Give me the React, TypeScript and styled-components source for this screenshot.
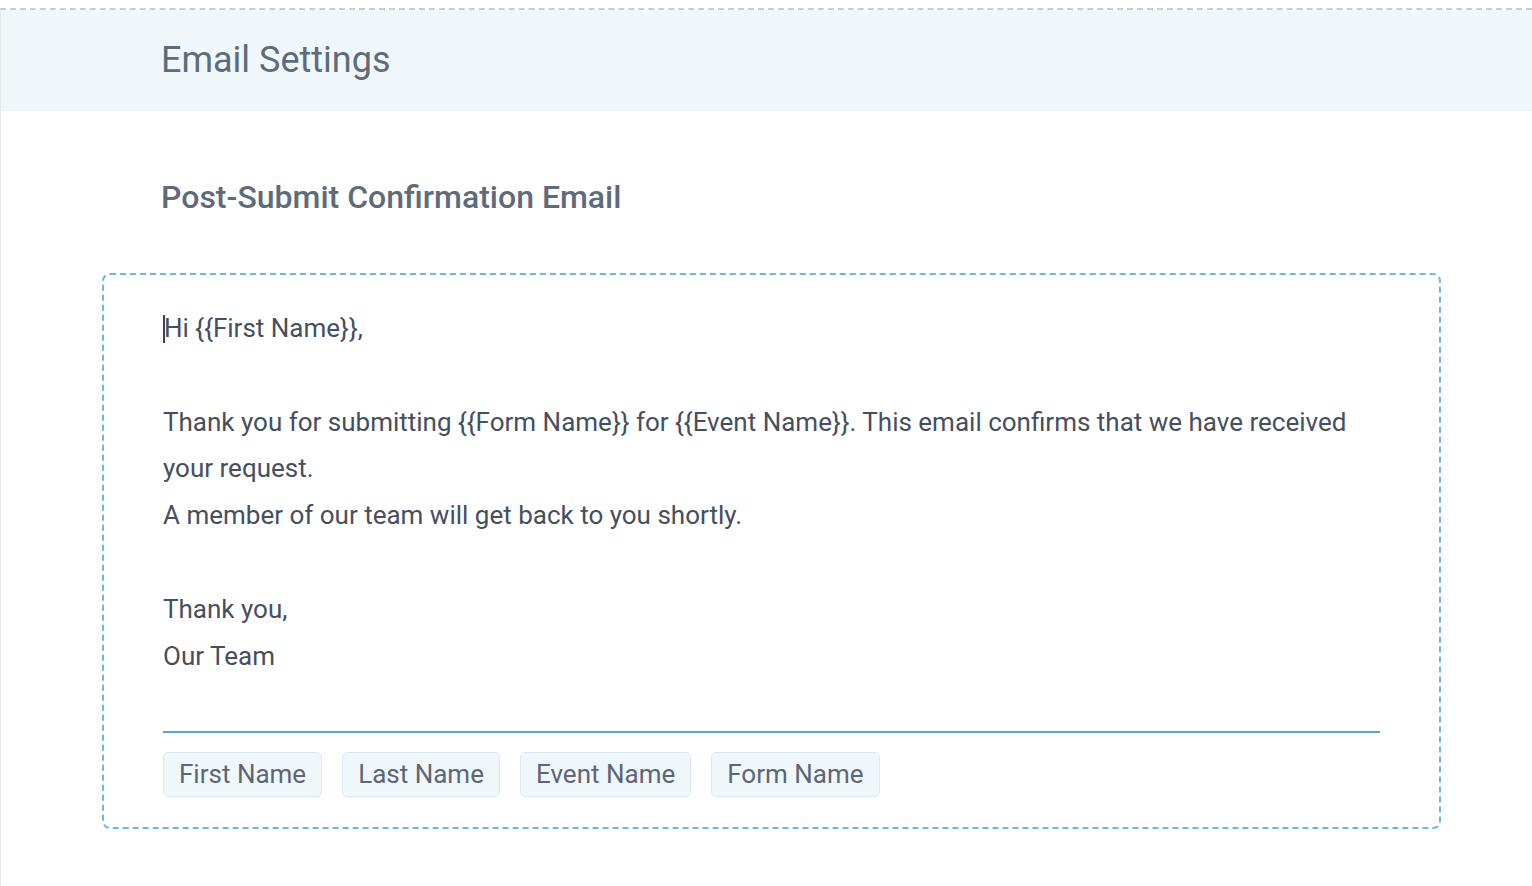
import React from "react";
import styled, { createGlobalStyle } from "styled-components";

const GlobalStyle = createGlobalStyle`
  html, body { margin: 0; padding: 0; background: #ffffff; }
  body { font-family: Roboto, "Liberation Sans", Arial, sans-serif; }
  * { box-sizing: border-box; }
`;

const Page = styled.div`
  margin-top: 8px;
  border-top: 2px dashed #cccccc;
  border-left: 1px solid #e6e8ea;
  min-height: calc(100vh - 8px);
`;

const HeaderBand = styled.header`
  height: 101px;
  background: #f0f7fb;
  display: flex;
  align-items: center;
  padding-left: 160px;
  padding-bottom: 1px;
`;

const PageTitle = styled.h1`
  margin: 0;
  font-size: 36px;
  font-weight: 400;
  color: #5f6b7a;
`;

const Content = styled.main`
  padding: 0 91px 40px 101px;
`;

const SectionTitle = styled.h2`
  margin: 67px 0 57px 59px;
  font-size: 32px;
  font-weight: 500;
  color: #5f6b7a;
`;

const EditorCard = styled.section`
  border: 2px dashed #6db6df;
  border-radius: 8px;
  padding: 30px 59px 30px 59px;
`;

const EditorArea = styled.div`
  font-size: 26px;
  line-height: 46.8px;
  color: #454f5e;
  padding-bottom: 52px;
  border-bottom: 2px solid #5aa5d6;
`;

const Line = styled.div`
  min-height: 46.8px;
`;

const Caret = styled.span`
  display: inline-block;
  width: 2px;
  height: 28px;
  background: #3a4350;
  vertical-align: -6px;
  margin-right: -1px;
`;

const ChipRow = styled.div`
  display: flex;
  gap: 20px;
  margin-top: 19px;
`;

const Chip = styled.button`
  height: 45px;
  padding: 0 15px;
  border: 1px solid #d9e9f2;
  border-radius: 5px;
  background: #f0f7fb;
  color: #5d6675;
  font-family: Roboto, "Liberation Sans", Arial, sans-serif;
  font-size: 26px;
  line-height: 43px;
  cursor: pointer;
`;

const lines: string[] = [
  "",
  "Thank you for submitting {{Form Name}} for {{Event Name}}. This email confirms that we have received your request.",
  "A member of our team will get back to you shortly.",
  "",
  "Thank you,",
  "Our Team",
];

const chips = ["First Name", "Last Name", "Event Name", "Form Name"];

export default function App() {
  return (
    <>
      <GlobalStyle />
      <Page>
        <HeaderBand>
          <PageTitle>Email Settings</PageTitle>
        </HeaderBand>
        <Content>
          <SectionTitle>Post-Submit Confirmation Email</SectionTitle>
          <EditorCard>
            <EditorArea>
              <Line>
                <Caret />
                Hi {"{{First Name}}"},
              </Line>
              {lines.map((l, i) => (
                <Line key={i}>{l}</Line>
              ))}
            </EditorArea>
            <ChipRow>
              {chips.map((c) => (
                <Chip key={c}>{c}</Chip>
              ))}
            </ChipRow>
          </EditorCard>
        </Content>
      </Page>
    </>
  );
}
